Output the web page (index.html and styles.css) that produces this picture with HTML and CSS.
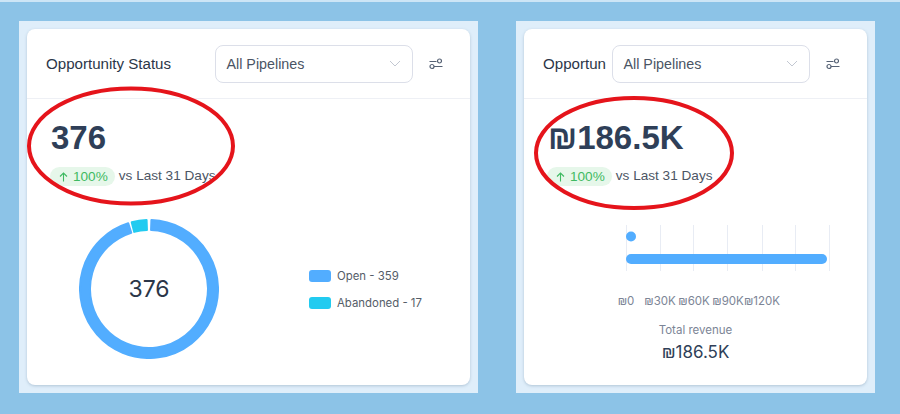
FILE: index.html
```html
<!DOCTYPE html>
<html lang="en">
  <head>
    <meta charset="utf-8" />
    <title>Opportunity Dashboard</title>
    <meta name="viewport" content="width=device-width,initial-scale=1" />
    <link rel="stylesheet" href="styles.css">
  </head>
  <body>
    <div class="p-board">
      <!-- Opportunity Status -->
      <section class="p-panel p-panel--status">
        <div class="p-card">
          <header class="p-card__head">
            <h2 class="p-card__title">Opportunity Status</h2>
            <div class="p-select">
              <span>All Pipelines</span>
              <svg class="p-select__chevron" width="12" height="7" viewBox="0 0 12 7"><path d="M1 1l5 5 5-5" /></svg>
            </div>
            <svg class="p-filter" width="14" height="12" viewBox="0 0 14 12">
              <path d="M0.5 3.5H7.5M5 8.5H13.5" />
              <circle cx="10.5" cy="3" r="2" />
              <circle cx="3" cy="8.5" r="2" />
            </svg>
          </header>
          <div class="p-stat">
            <div class="p-stat__value">376</div>
            <div class="p-stat__trend">
              <span class="p-pill">
                <svg width="9" height="10" viewBox="0 0 9 10"><path d="M4.5 9.5V1M1 4.5l3.5-3.5 3.5 3.5" /></svg>
                100%
              </span>
              <span class="p-stat__period">vs Last 31 Days</span>
            </div>
          </div>
          <div class="p-donut-row">
            <div class="p-donut">
              <svg width="140" height="140" viewBox="0 0 140 140">
                <path class="p-seg p-seg--open" d="M72.41 1.04A69 69 0 1 1 49.25 4.2L52.26 13.73A59 59 0 1 0 72.06 11.04Z" />
                <path class="p-seg p-seg--abandoned" d="M52.72 3.2A69 69 0 0 1 67.59 1.04L67.94 11.04A59 59 0 0 0 55.23 12.88Z" />
              </svg>
              <span class="p-donut__total">376</span>
            </div>
            <ul class="p-legend">
              <li class="p-legend__item"><i class="p-legend__swatch p-legend__swatch--open"></i>Open - 359</li>
              <li class="p-legend__item"><i class="p-legend__swatch p-legend__swatch--abandoned"></i>Abandoned - 17</li>
            </ul>
          </div>
        </div>
        <svg class="p-ring p-ring--status" width="208" height="120" viewBox="0 0 208 120"><ellipse cx="104" cy="60" rx="102" ry="57.5" /></svg>
      </section>

      <!-- Opportunity Value -->
      <section class="p-panel p-panel--value">
        <div class="p-card">
          <header class="p-card__head">
            <h2 class="p-card__title">Opportun</h2>
            <div class="p-select">
              <span>All Pipelines</span>
              <svg class="p-select__chevron" width="12" height="7" viewBox="0 0 12 7"><path d="M1 1l5 5 5-5" /></svg>
            </div>
            <svg class="p-filter" width="14" height="12" viewBox="0 0 14 12">
              <path d="M0.5 3.5H7.5M5 8.5H13.5" />
              <circle cx="10.5" cy="3" r="2" />
              <circle cx="3" cy="8.5" r="2" />
            </svg>
          </header>
          <div class="p-stat">
            <div class="p-stat__value">₪186.5K</div>
            <div class="p-stat__trend">
              <span class="p-pill">
                <svg width="9" height="10" viewBox="0 0 9 10"><path d="M4.5 9.5V1M1 4.5l3.5-3.5 3.5 3.5" /></svg>
                100%
              </span>
              <span class="p-stat__period">vs Last 31 Days</span>
            </div>
          </div>
          <svg class="p-bars" width="343" height="88" viewBox="0 0 343 88">
            <g class="p-bars__grid">
              <path d="M102.5 0V46M136.5 0V46M169.5 0V46M203.5 0V46M238.5 0V46M271.5 0V46M305.5 0V46" />
            </g>
            <circle class="p-bars__fill" cx="107" cy="11.5" r="5" />
            <rect class="p-bars__fill" x="102" y="29" width="201" height="10" rx="5" />
            <g class="p-bars__labels">
              <text x="102" y="80">₪0</text>
              <text x="136" y="80">₪30K</text>
              <text x="170" y="80">₪60K</text>
              <text x="204" y="80">₪90K</text>
              <text x="238" y="80">₪120K</text>
            </g>
          </svg>
          <div class="p-total">
            <div class="p-total__label">Total revenue</div>
            <div class="p-total__value">₪186.5K</div>
          </div>
        </div>
        <svg class="p-ring p-ring--value" width="204" height="116" viewBox="0 0 204 116"><ellipse cx="102" cy="58" rx="98" ry="55" /></svg>
      </section>
    </div>
  </body>
</html>
```

FILE: styles.css
```css
/* Base */
html { box-sizing: border-box; }
*, *:before, *:after { box-sizing: inherit; }
body {
  margin: 0;
  height: 414px;
  overflow: hidden;
  background-color: #8cc3e7;
  border-top: 2px solid #cde5f6;
  font-family: "Liberation Sans", Arial, sans-serif;
  color: #2e3a4e;
}
/* Layout */
.p-board {
  display: flex;
  gap: 38px;
  padding: 19px 0 0 19px;
}
.p-panel {
  position: relative;
  height: 372px;
  padding: 8px;
  background-color: #dfeefa;
}
.p-panel--status { width: 459px; }
.p-panel--value { width: 359px; }
/* Card */
.p-card {
  height: 100%;
  background-color: #fff;
  border-radius: 8px;
  box-shadow: 0 1px 3px rgba(90, 120, 150, 0.35);
}
.p-card__head {
  display: flex;
  align-items: center;
  height: 70px;
  padding: 0 27px 0 19px;
  border-bottom: 1px solid #eef0f5;
}
.p-card__title {
  flex: 1;
  min-width: 0;
  margin: 0 7px 0 0;
  white-space: nowrap;
  font-size: 15.1px;
  font-weight: 400;
  color: #2b3648;
}
/* Select */
.p-select {
  display: flex;
  align-items: center;
  justify-content: space-between;
  flex: none;
  width: 198px;
  height: 38px;
  padding: 0 11px 0 10.5px;
  border: 1px solid #dcdfe9;
  border-radius: 8px;
  font-size: 14.3px;
  color: #4a5464;
}
.p-select__chevron {
  fill: none;
  stroke: #c3c8d2;
  stroke-width: 1;
}
.p-filter {
  flex: none;
  margin-left: 16px;
  fill: none;
  stroke: #566275;
  stroke-width: 1.2;
}
/* Headline number */
.p-stat { padding: 20px 0 0 24px; }
.p-stat__value {
  font-size: 33px;
  line-height: 38px;
  font-weight: 700;
  color: #2f3f58;
}
.p-stat__trend {
  display: flex;
  align-items: center;
  gap: 4px;
  margin-top: 10px;
  font-size: 13.6px;
  color: #4c5564;
}
.p-stat__period { margin-bottom: 3px; }
.p-pill {
  display: flex;
  align-items: center;
  gap: 5px;
  height: 19px;
  margin-left: -1px;
  padding: 0 7px 0 9px;
  border-radius: 10px;
  background-color: #e6f7ea;
  color: #3fba62;
}
.p-pill svg {
  fill: none;
  stroke: #3fba62;
  stroke-width: 1.1;
}
/* Donut */
.p-donut-row {
  display: flex;
  align-items: center;
  margin-top: 33px;
  padding-left: 52px;
}
.p-donut {
  display: grid;
  place-items: center;
  flex: none;
  width: 140px;
  height: 140px;
}
.p-donut svg, .p-donut__total { grid-area: 1 / 1; }
.p-donut__total {
  font-family: Inter, sans-serif;
  font-size: 23px;
  color: #2b3648;
}
.p-seg {
  stroke-width: 2;
  stroke-linejoin: round;
}
.p-seg--open { fill: #52adff; stroke: #52adff; }
.p-seg--abandoned { fill: #22cbf0; stroke: #22cbf0; }
.p-legend {
  display: flex;
  flex-direction: column;
  gap: 11px;
  margin: 0 0 0 90px;
  padding: 0;
  list-style: none;
}
.p-legend__item {
  display: flex;
  align-items: center;
  gap: 6px;
  height: 16px;
  font-family: Inter, sans-serif;
  font-size: 11.4px;
  color: #555d68;
}
.p-legend__swatch {
  width: 22px;
  height: 12px;
  border-radius: 3px;
}
.p-legend__swatch--open { background-color: #52adff; }
.p-legend__swatch--abandoned { background-color: #22cbf0; }
/* Bars */
.p-bars {
  display: block;
  margin-top: 39px;
}
.p-bars__grid path {
  fill: none;
  stroke: #e8ecf4;
  stroke-width: 1;
}
.p-bars__fill { fill: #52adff; }
.p-bars__labels text {
  font-family: Inter, sans-serif;
  font-size: 11.5px;
  fill: #7c8596;
  text-anchor: middle;
}
.p-total {
  margin-top: 9px;
  text-align: center;
  font-family: Inter, sans-serif;
}
.p-total__label {
  font-size: 11.5px;
  line-height: 16px;
  color: #7c8596;
}
.p-total__value {
  margin-top: 3px;
  font-size: 17px;
  line-height: 22px;
  color: #2f3f58;
}
/* Red marker rings drawn over the screenshot */
.p-ring {
  position: absolute;
  fill: none;
  stroke: #e5141b;
  stroke-width: 4;
}
.p-ring--status { left: 7.5px; top: 65px; }
.p-ring--value { left: 16px; top: 74px; }
```
